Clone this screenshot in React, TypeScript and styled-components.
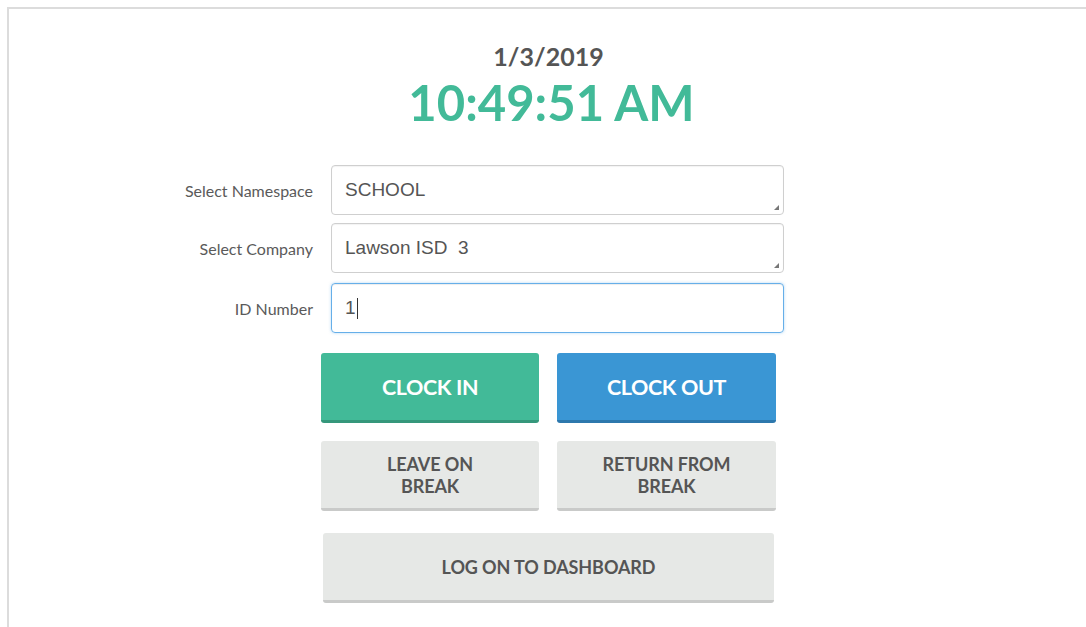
import React from 'react';
import styled, { createGlobalStyle } from 'styled-components';

const GlobalStyle = createGlobalStyle`
  html, body {
    margin: 0;
    padding: 0;
    background: #fff;
  }
  body {
    font-family: Lato, 'Liberation Sans', sans-serif;
    color: #555;
  }
`;

const Frame = styled.div`
  margin: 7px 0 0 7px;
  min-height: 620px;
  border-top: 2px solid #dcdcdc;
  border-left: 2px solid #dcdcdc;
  padding-top: 32px;
  box-sizing: border-box;
`;

const Header = styled.div`
  width: 455px;
  margin-left: 315px;
  text-align: center;
`;

const DateText = styled.div`
  font-size: 25px;
  font-weight: 700;
  line-height: 30px;
  color: #555;
  margin-left: -6px;
`;

const TimeText = styled.div`
  font-size: 49px;
  font-weight: 700;
  line-height: 62px;
  color: #42ba98;
`;

const Form = styled.div`
  display: grid;
  grid-template-columns: 153px 453px;
  column-gap: 18px;
  margin: 32px 0 0 151px;
`;

const Label = styled.label<{ $gap?: number }>`
  display: flex;
  align-items: center;
  justify-content: flex-end;
  height: 50px;
  margin-bottom: ${(p) => p.$gap ?? 0}px;
  font-size: 16px;
  color: #5a5a5a;
`;

const Field = styled.div<{ $focused?: boolean; $gap?: number }>`
  position: relative;
  display: flex;
  align-items: center;
  height: 50px;
  box-sizing: border-box;
  margin-bottom: ${(p) => p.$gap ?? 0}px;
  padding-left: 13px;
  border: 1px solid ${(p) => (p.$focused ? '#66afe9' : '#cfcfcf')};
  border-radius: 4px;
  box-shadow: ${(p) =>
    p.$focused
      ? 'inset 0 1px 1px rgba(0,0,0,.075), 0 0 3px rgba(102,175,233,.5)'
      : 'inset 0 1px 1px rgba(0,0,0,.05)'};
  font-family: 'Liberation Sans', Arial, sans-serif;
  font-size: 19px;
  color: #555;
  white-space: pre;
`;

// little resize grip in the bottom right corner of the list boxes
const Grip = styled.span`
  position: absolute;
  right: 4px;
  bottom: 4px;
  width: 0;
  height: 0;
  border-left: 5px solid transparent;
  border-bottom: 5px solid #777;
`;

const Caret = styled.span`
  display: inline-block;
  width: 1px;
  height: 21px;
  margin-left: 1px;
  background: #333;
`;

const ButtonGrid = styled.div`
  display: grid;
  grid-template-columns: 218px 219px;
  column-gap: 18px;
  row-gap: 18px;
  margin: 20px 0 0 312px;
`;

const variants = {
  green: { bg: '#42ba98', edge: '#35977b', fg: '#fff' },
  blue: { bg: '#3a96d4', edge: '#2d78ad', fg: '#fff' },
  gray: { bg: '#e6e8e6', edge: '#c9cac9', fg: '#555' },
};

const Button = styled.button<{ $variant: keyof typeof variants; $big?: boolean }>`
  height: 70px;
  padding: 0 10px;
  box-sizing: border-box;
  border: none;
  border-bottom: 3px solid ${(p) => variants[p.$variant].edge};
  border-radius: 3px;
  background: ${(p) => variants[p.$variant].bg};
  color: ${(p) => variants[p.$variant].fg};
  font-family: Lato, sans-serif;
  font-weight: 700;
  font-size: ${(p) => (p.$big ? 21.5 : 18)}px;
  line-height: 22px;
  letter-spacing: ${(p) => (p.$big ? '-0.4px' : '-0.1px')};
  text-transform: uppercase;
  cursor: pointer;
`;

const WideButton = styled(Button)`
  display: block;
  width: 451px;
  margin: 22px 0 0 314px;
`;

function App() {
  return (
    <>
      <GlobalStyle />
      <Frame>
        <Header>
          <DateText>1/3/2019</DateText>
          <TimeText>10:49:51 AM</TimeText>
        </Header>
        <Form>
          <Label $gap={8}>Select Namespace</Label>
          <Field $gap={8}>
            SCHOOL
            <Grip />
          </Field>
          <Label $gap={10}>Select Company</Label>
          <Field $gap={10}>
            Lawson ISD  3
            <Grip />
          </Field>
          <Label>ID Number</Label>
          <Field $focused>
            1
            <Caret />
          </Field>
        </Form>
        <ButtonGrid>
          <Button $variant="green" $big>
            Clock In
          </Button>
          <Button $variant="blue" $big>
            Clock Out
          </Button>
          <Button $variant="gray">
            Leave on
            <br />
            Break
          </Button>
          <Button $variant="gray">
            Return from
            <br />
            Break
          </Button>
        </ButtonGrid>
        <WideButton $variant="gray">Log on to Dashboard</WideButton>
      </Frame>
    </>
  );
}

export default App;
